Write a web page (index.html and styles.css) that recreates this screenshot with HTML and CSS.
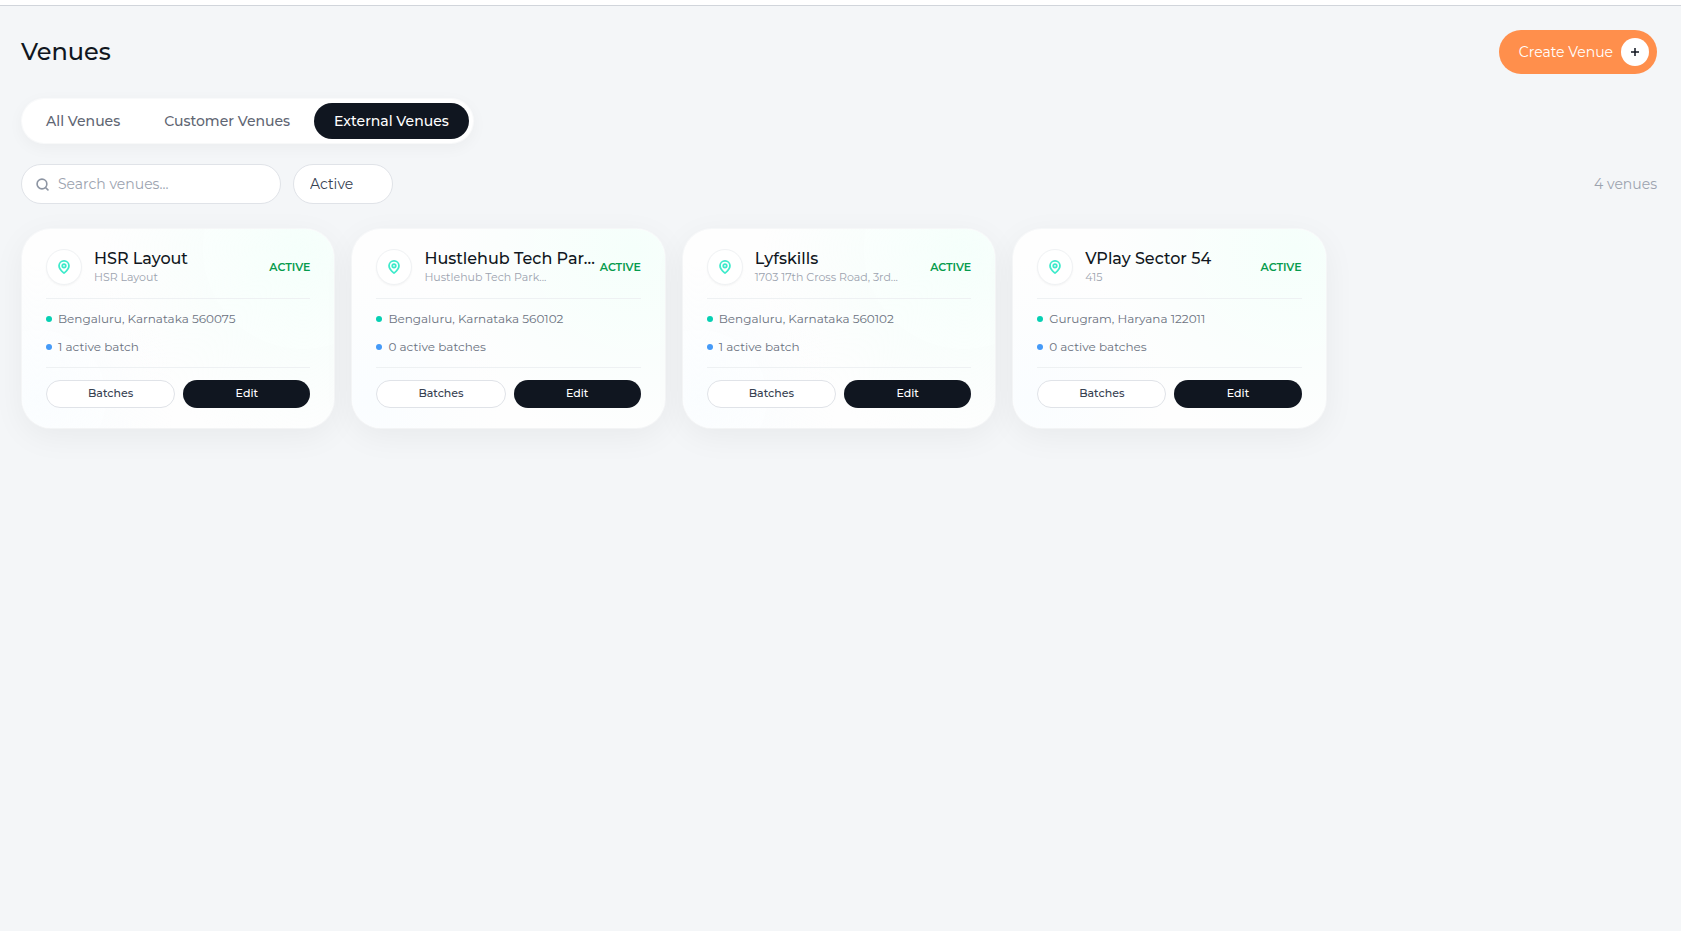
FILE: index.html
```
<!DOCTYPE html>
<html lang="en">
<head>
  <meta charset="UTF-8" />
  <title>Venues</title>
  <meta name="viewport" content="width=device-width, initial-scale=1.0" />
  <link rel="stylesheet" href="styles.css">
</head>
<body>
  <svg class="sprite" aria-hidden="true">
    <symbol id="pin" viewBox="0 0 24 24">
      <path d="M20.500 10c0 5.500-5.500 10.200-7.900 12.100a1 1 0 0 1-1.200 0C9 20.200 3.500 15.500 3.500 10a8.500 8.500 0 0 1 17 0"/>
      <circle cx="12" cy="10" r="3"/>
    </symbol>
  </svg>

  <div class="topbar"></div>

  <main class="page">
    <header class="page-header">
      <h1>Venues</h1>
      <button class="create-btn">
        Create Venue
        <span class="create-icon">
          <svg viewBox="0 0 8 8"><path d="M4 0v8M0 4h8"/></svg>
        </span>
      </button>
    </header>

    <nav class="tabs">
      <button class="tab">All Venues</button>
      <button class="tab">Customer Venues</button>
      <button class="tab active">External Venues</button>
    </nav>

    <div class="filters">
      <label class="search">
        <svg viewBox="0 0 24 24"><circle cx="11" cy="11" r="9"/><path d="M22 22l-4.500-4.500"/></svg>
        <input type="text" placeholder="Search venues..." aria-label="Search venues">
      </label>
      <select class="status-filter" aria-label="Status">
        <option>Active</option>
        <option>Inactive</option>
      </select>
      <span class="count">4 venues</span>
    </div>

    <section class="grid">
      <article class="card">
        <div class="card-header">
          <span class="card-icon"><svg><use href="#pin"/></svg></span>
          <div class="card-title">
            <h2>HSR Layout</h2>
            <p>HSR Layout</p>
          </div>
          <span class="status">ACTIVE</span>
        </div>
        <ul class="details">
          <li class="place">Bengaluru, Karnataka 560075</li>
          <li class="batches">1 active batch</li>
        </ul>
        <div class="actions">
          <button class="btn btn-light">Batches</button>
          <button class="btn btn-dark">Edit</button>
        </div>
      </article>

      <article class="card">
        <div class="card-header">
          <span class="card-icon"><svg><use href="#pin"/></svg></span>
          <div class="card-title">
            <h2>Hustlehub Tech Par...</h2>
            <p>Hustlehub Tech Park...</p>
          </div>
          <span class="status">ACTIVE</span>
        </div>
        <ul class="details">
          <li class="place">Bengaluru, Karnataka 560102</li>
          <li class="batches">0 active batches</li>
        </ul>
        <div class="actions">
          <button class="btn btn-light">Batches</button>
          <button class="btn btn-dark">Edit</button>
        </div>
      </article>

      <article class="card">
        <div class="card-header">
          <span class="card-icon"><svg><use href="#pin"/></svg></span>
          <div class="card-title">
            <h2>Lyfskills</h2>
            <p>1703 17th Cross Road, 3rd...</p>
          </div>
          <span class="status">ACTIVE</span>
        </div>
        <ul class="details">
          <li class="place">Bengaluru, Karnataka 560102</li>
          <li class="batches">1 active batch</li>
        </ul>
        <div class="actions">
          <button class="btn btn-light">Batches</button>
          <button class="btn btn-dark">Edit</button>
        </div>
      </article>

      <article class="card">
        <div class="card-header">
          <span class="card-icon"><svg><use href="#pin"/></svg></span>
          <div class="card-title">
            <h2>VPlay Sector 54</h2>
            <p>415</p>
          </div>
          <span class="status">ACTIVE</span>
        </div>
        <ul class="details">
          <li class="place">Gurugram, Haryana 122011</li>
          <li class="batches">0 active batches</li>
        </ul>
        <div class="actions">
          <button class="btn btn-light">Batches</button>
          <button class="btn btn-dark">Edit</button>
        </div>
      </article>
    </section>
  </main>
</body>
</html>
```
FILE: styles.css
```
* {
  box-sizing: border-box;
}

html, body {
  margin: 0;
  padding: 0;
}

body {
  min-height: 100vh;
  background: #f4f6f8;
  color: #101620;
  font-family: Montserrat, Inter, sans-serif;
  font-size: 14px;
}

h1, h2, p, ul {
  margin: 0;
  padding: 0;
}

button, input, select {
  font-family: inherit;
}

button {
  cursor: pointer;
}

svg {
  fill: none;
  stroke: currentColor;
  stroke-width: 2;
  stroke-linecap: round;
  stroke-linejoin: round;
}

.sprite {
  display: none;
}

.topbar {
  height: 6px;
  background: white;
  border-bottom: 1px solid #d1d5db;
}

.page {
  padding: 24px 24px 24px 21px;
}

.page-header {
  display: flex;
  align-items: center;
  justify-content: space-between;
  margin-bottom: 24px;
}

h1 {
  font-size: 24px;
  font-weight: 500;
  line-height: 32px;
}

.create-btn {
  display: flex;
  align-items: center;
  gap: 8px;
  height: 44px;
  padding: 0 8px 0 20px;
  border: none;
  border-radius: 22px;
  background: #ff8f4c;
  color: white;
  font-size: 14px;
  font-weight: 400;
}

.create-icon {
  display: flex;
  align-items: center;
  justify-content: center;
  width: 28px;
  height: 28px;
  border-radius: 50%;
  background: white;
  color: #101620;
}

.create-icon svg {
  width: 8px;
  height: 8px;
  stroke-width: 1.5;
  stroke-linecap: butt;
}

.tabs {
  display: flex;
  gap: 4px;
  width: fit-content;
  padding: 4px;
  border: 1px solid rgba(255, 255, 255, 0.6);
  border-radius: 23px;
  background: white;
  background-clip: padding-box;
  box-shadow: 0 4px 16px rgba(0, 0, 0, 0.04);
  margin-bottom: 20px;
}

.tab {
  height: 36px;
  padding: 0 20px;
  border: none;
  border-radius: 18px;
  background: none;
  color: #5f6673;
  font-size: 14px;
  font-weight: 500;
}

.tab.active {
  background: #101620;
  color: white;
}

.filters {
  display: flex;
  align-items: center;
  gap: 12px;
  margin-bottom: 24px;
}

.search {
  display: flex;
  align-items: center;
  gap: 9px;
  width: 260px;
  height: 40px;
  padding: 0 14px;
  border: 1px solid #e0e3e8;
  border-radius: 20px;
  background: white;
  color: #8d95a3;
}

.search svg {
  flex: none;
  width: 13px;
  height: 13px;
  stroke-width: 3;
}

.search input {
  flex: 1;
  min-width: 0;
  padding: 0;
  border: none;
  outline: none;
  background: none;
  color: #374151;
  font-size: 14px;
}

.search input::placeholder {
  color: #9ca3af;
}

.status-filter {
  appearance: none;
  width: 100px;
  height: 40px;
  padding: 0 16px;
  border: 1px solid #e0e3e8;
  border-radius: 20px;
  background: white;
  color: #374151;
  font-size: 14px;
}

.count {
  margin-left: auto;
  color: #9ca3af;
}

.grid {
  display: grid;
  grid-template-columns: repeat(auto-fill, minmax(280px, 1fr));
  gap: 16px;
}

.card {
  padding: 20px 24px;
  border: 1px solid rgba(255, 255, 255, 0.4);
  border-radius: 30px;
  background:
    radial-gradient(circle at 90% 10%, #f5fffb, transparent 60%),
    radial-gradient(circle at 5% 85%, #fafdff, transparent 40%),
    #fefefe;
  background-clip: padding-box;
  box-shadow: 0 8px 32px rgba(0, 0, 0, 0.05);
}

.card-header {
  display: flex;
  align-items: center;
  gap: 12px;
  padding-bottom: 13px;
  border-bottom: 1px solid #eef1f3;
}

.card-icon {
  display: flex;
  align-items: center;
  justify-content: center;
  flex: none;
  width: 36px;
  height: 36px;
  border: 1px solid #f0f2f4;
  border-radius: 50%;
  background: white;
  color: #3eeacb;
  box-shadow: 0 1px 2px rgba(0, 0, 0, 0.04);
}

.card-icon svg {
  width: 14px;
  height: 14px;
  stroke-width: 3;
}

.card-title {
  flex: 1;
  min-width: 0;
}

.card-title h2 {
  font-size: 16px;
  font-weight: 500;
  line-height: 20px;
  white-space: nowrap;
}

.card-title p {
  color: #9ca3af;
  font-size: 11px;
  line-height: 16px;
}

.status {
  color: #069b4d;
  font-size: 11px;
  font-weight: 600;
}

.details {
  display: flex;
  flex-direction: column;
  gap: 12px;
  padding: 12px 0;
  border-bottom: 1px solid #eef1f3;
  list-style: none;
}

.details li {
  display: flex;
  align-items: center;
  gap: 6px;
  color: #6b7280;
  font-size: 12px;
  line-height: 16px;
}

.details li::before {
  content: "";
  width: 6px;
  height: 6px;
  border-radius: 50%;
}

.place::before {
  background: #06d0b3;
}

.batches::before {
  background: #459af8;
}

.actions {
  display: flex;
  gap: 8px;
  padding-top: 12px;
}

.btn {
  flex: 1;
  height: 28px;
  padding: 0 0 2px;
  border-radius: 14px;
  font-size: 11px;
  font-weight: 500;
}

.btn-light {
  border: 1px solid #e0e3e8;
  background: white;
  color: #374151;
}

.btn-dark {
  border: none;
  background: #101620;
  color: white;
}
```
